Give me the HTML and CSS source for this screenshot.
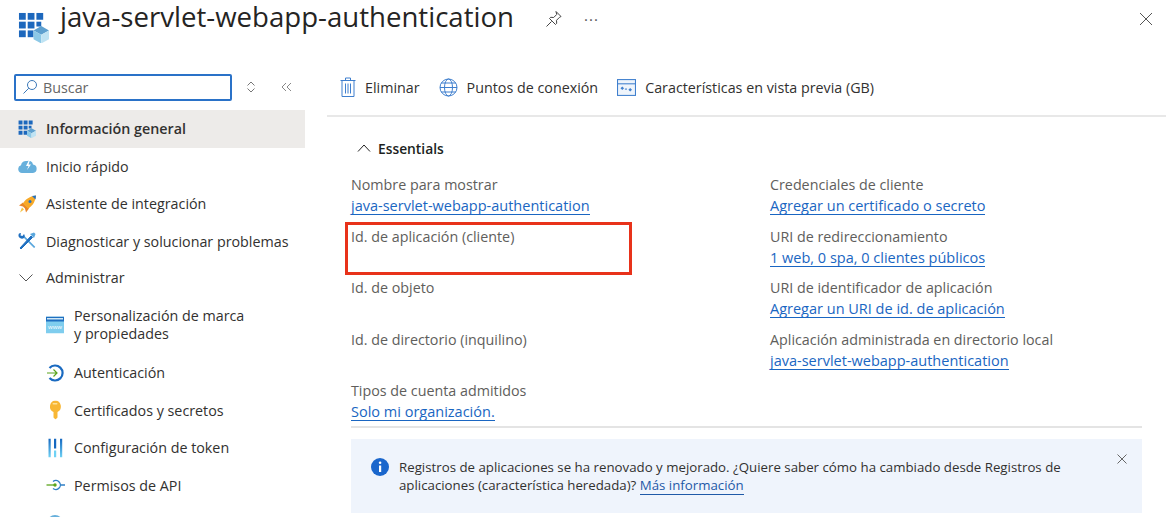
FILE: index.html
```html
<!DOCTYPE html>
<html lang="es">
<head>
    <meta charset="UTF-8">
    <meta name="viewport" content="width=device-width, initial-scale=1.0">
    <title>java-servlet-webapp-authentication</title>
    <link rel="stylesheet" href="styles.css">
</head>
<body>
    <header class="page-header">
        <svg class="app-icon" width="31" height="31" viewBox="0 0 32 32">
            <g fill="#1d68bd">
                <rect x="1" y="1" width="7" height="7"/><rect x="10" y="1" width="7" height="7"/><rect x="19" y="1" width="7" height="7"/>
                <rect x="1" y="10" width="7" height="7"/><rect x="10" y="10" width="7" height="7"/><rect x="19" y="10" width="5" height="5"/>
                <rect x="1" y="19" width="7" height="7"/><rect x="10" y="19" width="6" height="7"/>
            </g>
            <path d="M16 19l8-4.500 8 4.500-8 4.500z" fill="#5ea0cf"/>
            <path d="M16 19l8 4.500v9l-8-4.500z" fill="#8cc8e6"/>
            <path d="M32 19l-8 4.500v9l8-4.500z" fill="#bfe3f3"/>
        </svg>
        <h1>java-servlet-webapp-authentication</h1>
        <svg class="pin-icon" width="18" height="18" viewBox="0 0 18 18" fill="none" stroke="#444" stroke-width="1">
            <path d="M11 1.500l5 5-1.500 .8-3 3 .2 3-1.200 1.200-6-6 1.200-1.200 3 .2 3-3z"/><path d="M6.500 11.500L1.500 16.500"/>
        </svg>
        <span class="more-dots">···</span>
        <svg class="close-icon" width="14" height="14" viewBox="0 0 14 14" stroke="#555" stroke-width="1"><path d="M1 1l12 12M13 1L1 13"/></svg>
    </header>

    <div class="layout">
        <nav class="sidebar">
            <div class="search-row">
                <div class="search-box">
                    <svg width="16" height="16" viewBox="0 0 16 16" fill="none" stroke="#3b78b8" stroke-width="1"><circle cx="10" cy="6" r="4.500"/><path d="M6.800 9.200L1.500 14.500"/></svg>
                    <span>Buscar</span>
                </div>
                <svg class="search-tool" width="10" height="12" viewBox="0 0 10 12" fill="none" stroke="#777"><path d="M1.500 4.500L5 1l3.500 3.500M1.500 7.500L5 11l3.500-3.500"/></svg>
                <svg class="search-tool collapse" width="11" height="10" viewBox="0 0 11 10" fill="none" stroke="#888"><path d="M5 1L1 5l4 4M10 1L6 5l4 4"/></svg>
            </div>

            <ul class="nav-list">
                <li class="nav-item active">
                    <svg class="nav-icon" width="18" height="18" viewBox="0 0 32 32">
                        <path d="M1 1h7v7H1zM10 1h7v7h-7zM19 1h7v7h-7zM1 10h7v7H1zM10 10h7v7h-7zM19 10h5v5h-5zM1 19h7v7H1zM10 19h6v7h-6z" fill="#1d68bd"/>
                        <path d="M16 19l8-4.500 8 4.500-8 4.500z" fill="#5ea0cf"/><path d="M16 19l8 4.500v9l-8-4.500z" fill="#8cc8e6"/><path d="M32 19l-8 4.500v9l8-4.500z" fill="#bfe3f3"/>
                    </svg>
                    Información general
                </li>
                <li class="nav-item">
                    <svg class="nav-icon" width="19" height="14" viewBox="0 0 19 14">
                        <path d="M4 14a4 4 0 0 1-1-7.800A5 5 0 0 1 9 2a4.500 4.500 0 0 1 6 3.500 4.300 4.300 0 0 1 0 8.500z" fill="#67b0dc"/>
                        <path d="M11 1L8 7h2.500L9 11l4-5.500h-2.500L12 1z" fill="#fff"/>
                    </svg>
                    Inicio rápido
                </li>
                <li class="nav-item">
                    <svg class="nav-icon" width="19" height="19" viewBox="0 0 19 19">
                        <path d="M1 11l4-3 6 6-3 4-1-4-2-2z" fill="#e8862a"/>
                        <path d="M5 9c2-4 6-7 13-8-1 7-4 11-8 13z" fill="#f7a928"/>
                        <path d="M14 1.500l4-.500-.500 4z" fill="#2272c3"/>
                        <circle cx="12" cy="7" r="1.500" fill="#2272c3"/>
                        <path d="M4 13l2 2-4 3z" fill="#f6c445"/>
                    </svg>
                    Asistente de integración
                </li>
                <li class="nav-item">
                    <svg class="nav-icon" width="18" height="18" viewBox="0 0 18 18">
                        <path d="M16 16L5 5l1.200-1.200 11 11a1.400 1.400 0 0 1-1.200 1.200z" fill="#5aa7dd"/>
                        <path d="M2 16L13 4l1.500 1.500L3 17z" fill="#1f6fc0" stroke="#1f6fc0"/>
                        <path d="M12 2l4-1.500L17.500 2 16 6z" fill="#5aa7dd"/>
                        <path d="M1 1.500a3.500 3.500 0 0 0 1 4.500 3.500 3.500 0 0 0 4 0 3.500 3.500 0 0 0 0-4L4.500 4 2.500 3.500 3 1z" fill="#1f6fc0"/>
                    </svg>
                    Diagnosticar y solucionar problemas
                </li>
                <li class="nav-item nav-group">
                    <svg class="nav-icon" width="16" height="9" viewBox="0 0 16 9" fill="none" stroke="#555"><path d="M1.500 1L8 7.500 14.500 1"/></svg>
                    Administrar
                </li>
                <li class="nav-item nav-sub nav-tall">
                    <svg class="nav-icon" width="18" height="17" viewBox="0 0 18 17">
                        <rect width="18" height="17" fill="#7fcdee"/><rect width="18" height="5" fill="#1f6fc0"/>
                        <rect x="1" y="1.500" width="16" height="1.500" fill="#cfe7f6"/>
                        <text x="9" y="12.500" class="www">www</text>
                    </svg>
                    <span>Personalización de marca<br>y propiedades</span>
                </li>
                <li class="nav-item nav-sub">
                    <svg class="nav-icon" width="18" height="18" viewBox="0 0 18 18" fill="none">
                        <path d="M3.500 4a7.500 7.500 0 1 1 0 10" stroke="#1a6ac0" stroke-width="2.200"/>
                        <path d="M1 9h10M7.500 5.500L11 9l-3.500 3.500" stroke="#5ba41c" stroke-width="1.200"/>
                    </svg>
                    Autenticación
                </li>
                <li class="nav-item nav-sub">
                    <svg class="nav-icon" width="18" height="19" viewBox="0 0 18 19">
                        <path d="M9 0a6 6 0 0 1 2.500 11.400V17l-2 2-2-2v-5.600A6 6 0 0 1 9 0z" fill="#f8b735"/>
                        <rect x="6.500" y="2.500" width="5" height="1.500" rx=".7" fill="#fde29a"/>
                    </svg>
                    Certificados y secretos
                </li>
                <li class="nav-item nav-sub">
                    <svg class="nav-icon" width="18" height="19" viewBox="0 0 18 19">
                        <defs><linearGradient id="tokenBar" x1="0" y1="0" x2="0" y2="1"><stop offset="0" stop-color="#1668c0"/><stop offset="1" stop-color="#6fd2f5"/></linearGradient></defs>
                        <rect x="2.500" y="0" width="2.200" height="19" fill="url(#tokenBar)"/>
                        <rect x="8" y="0" width="2.200" height="10" fill="#1668c0"/><rect x="8" y="12" width="2.200" height="7" fill="#6fd2f5"/>
                        <rect x="14" y="0" width="2.200" height="19" fill="url(#tokenBar)"/>
                    </svg>
                    Configuración de token
                </li>
                <li class="nav-item nav-sub">
                    <svg class="nav-icon" width="19" height="14" viewBox="0 0 19 14" fill="none">
                        <path d="M7 3.500a4.500 4.500 0 1 1 0 7M14 7h5" stroke="#2e7fc6" stroke-width="1.300"/>
                        <path d="M.5 7h8" stroke="#5ba41c" stroke-width="1.300"/><circle cx="9" cy="7" r="1.700" fill="#5ba41c"/>
                    </svg>
                    Permisos de API
                </li>
                <li class="nav-item nav-sub">
                    <svg class="nav-icon" width="18" height="18" viewBox="0 0 18 18"><circle cx="9" cy="9" r="8" fill="#67b0dc"/></svg>
                </li>
            </ul>
        </nav>

        <main class="content">
            <div class="toolbar">
                <div class="tool">
                    <svg width="16" height="20" viewBox="0 0 16 20" fill="none" stroke="#3f7fce"><path d="M.5 3.500h15M5.500 3V1h5v2M2 3.500V19.500h12V3.500M5.500 6.500v10M8 6.500v10M10.500 6.500v10"/></svg>
                    Eliminar
                </div>
                <div class="tool">
                    <svg width="19" height="19" viewBox="0 0 19 19" fill="none" stroke="#3f7fce"><circle cx="9.500" cy="9.500" r="8.500"/><ellipse cx="9.500" cy="9.500" rx="4" ry="8.500"/><path d="M1 9.500h17M2.200 5h14.600M2.200 14h14.600"/></svg>
                    Puntos de conexión
                </div>
                <div class="tool">
                    <svg width="19" height="17" viewBox="0 0 18 16"><rect x=".5" y=".5" width="17" height="15" fill="#eef4fb" stroke="#3f7fce"/><path d="M.5 4.500h17" stroke="#3f7fce"/><path d="M5 7l1.700 1.700L5 10.400 3.300 8.700zM12.500 8.500l1.700 1.700-1.700 1.700-1.700-1.700z" fill="#3f7fce"/><path d="M7.500 9.500h2" stroke="#3f7fce"/></svg>
                    Características en vista previa (GB)
                </div>
            </div>

            <section class="essentials">
                <div class="essentials-title">
                    <svg width="14" height="8" viewBox="0 0 14 8" fill="none" stroke="#222"><path d="M1 7.500l6-6.500 6 6.500"/></svg>
                    Essentials
                </div>
                <div class="essentials-grid">
                    <div class="field-col">
                        <div class="field"><span>Nombre para mostrar</span><a>java-servlet-webapp-authentication</a></div>
                        <div class="field"><span>Id. de aplicación (cliente)</span></div>
                        <div class="field"><span>Id. de objeto</span></div>
                        <div class="field"><span>Id. de directorio (inquilino)</span></div>
                        <div class="field"><span>Tipos de cuenta admitidos</span><a>Solo mi organización.</a></div>
                        <div class="red-box"></div>
                    </div>
                    <div class="field-col">
                        <div class="field"><span>Credenciales de cliente</span><a>Agregar un certificado o secreto</a></div>
                        <div class="field"><span>URI de redireccionamiento</span><a>1 web, 0 spa, 0 clientes públicos</a></div>
                        <div class="field"><span>URI de identificador de aplicación</span><a>Agregar un URI de id. de aplicación</a></div>
                        <div class="field"><span>Aplicación administrada en directorio local</span><a>java-servlet-webapp-authentication</a></div>
                    </div>
                </div>
            </section>

            <div class="info-banner">
                <svg width="18" height="18" viewBox="0 0 18 18"><circle cx="9" cy="9" r="9" fill="#1a66cc"/><rect x="8" y="7.500" width="2.200" height="6.500" fill="#fff"/><circle cx="9.100" cy="4.800" r="1.300" fill="#fff"/></svg>
                <p>Registros de aplicaciones se ha renovado y mejorado. ¿Quiere saber cómo ha cambiado desde Registros de aplicaciones (característica heredada)? <a>Más información</a></p>
                <svg class="banner-close" width="10" height="10" viewBox="0 0 10 10" stroke="#666"><path d="M.5 .5l9 9M9.500 .5l-9 9"/></svg>
            </div>
        </main>
    </div>
</body>
</html>
```

FILE: styles.css
```css
* {
    margin: 0;
    padding: 0;
    box-sizing: border-box;
    font-family: 'Open Sans', 'Noto Sans', sans-serif;
}
html, body {
    height: 517px;
    overflow: hidden;
}
body {
    background-color: white;
    color: #323130;
    font-size: 14.3px;
}
a {
    color: #1a66c2;
    border-bottom: 1px solid #1a66c2;
    line-height: 17px;
}

/* Header */
.page-header {
    display: flex;
    align-items: center;
    height: 38px;
    padding-left: 18px;
}
.app-icon {
    align-self: flex-start;
    margin-top: 12px;
    margin-right: 11px;
}
.page-header h1 {
    font-size: 27.6px;
    font-weight: 400;
    color: #252423;
    white-space: nowrap;
    width: 485px;
    margin-bottom: 6px;
}
.more-dots {
    margin-left: 21px;
    color: #555;
    font-size: 15px;
    letter-spacing: 1px;
}
.close-icon {
    margin-left: auto;
    margin-right: 13px;
}

.layout {
    display: grid;
    grid-template-columns: 305px 1fr;
    margin-top: 35px;
}

/* Sidebar */
.search-row {
    display: flex;
    align-items: center;
    padding-left: 14px;
    height: 28px;
}
.search-box {
    display: flex;
    align-items: center;
    gap: 5px;
    width: 218px;
    height: 27px;
    padding-left: 6px;
    border: 2px solid #2a72c8;
    border-radius: 2px;
    color: #666;
}
.search-tool {
    margin-left: 14px;
}
.collapse {
    margin-left: 25px;
}
.nav-list {
    list-style-type: none;
    margin-top: 9px;
}
.nav-item {
    display: flex;
    align-items: center;
    height: 37.500px;
    padding-left: 46px;
    position: relative;
    white-space: nowrap;
}
.nav-item span {
    line-height: 18px;
}
.nav-icon {
    position: absolute;
    left: 18px;
    top: 50%;
    transform: translateY(-50%);
}
.active {
    background-color: #edebe9;
    font-weight: 600;
}
.nav-sub {
    padding-left: 74px;
}
.nav-sub .nav-icon {
    left: 46px;
}
.nav-group {
    height: 35px;
}
.nav-tall {
    height: 59px;
}

/* Main area */
.content {
    padding-left: 22px;
}
.toolbar {
    display: flex;
    align-items: center;
    gap: 19px;
    height: 44px;
    padding-left: 13px;
    padding-bottom: 14px;
    border-bottom: 2px solid #e8e8e8;
}
.tool {
    display: flex;
    align-items: center;
    gap: 9px;
    white-space: nowrap;
}
.essentials {
    padding-left: 24px;
    padding-right: 24px;
}
.essentials-title {
    display: flex;
    align-items: center;
    gap: 7px;
    margin-top: 21px;
    margin-left: 6px;
    height: 20px;
    font-size: 13.8px;
    font-weight: 600;
    color: #201f1e;
}
.essentials-grid {
    display: grid;
    grid-template-columns: 419px 1fr;
    margin-top: 17px;
    border-bottom: 2px solid #e4e4e4;
    height: 253px;
}
.field-col {
    position: relative;
}
.field {
    height: 51.500px;
    display: flex;
    flex-direction: column;
    align-items: flex-start;
    gap: 3px;
    color: #605e5c;
    white-space: nowrap;
}
.field a {
    font-size: 14.5px;
}
.red-box {
    position: absolute;
    left: -6px;
    top: 47px;
    width: 287px;
    height: 53px;
    border: 3px solid #e8321a;
}
.info-banner {
    display: flex;
    align-items: flex-start;
    gap: 10px;
    position: relative;
    width: 791px;
    height: 74px;
    margin-top: 11px;
    margin-left: 24px;
    padding: 19px 60px 0 20px;
    background-color: #eff4fc;
    font-size: 13.28px;
    line-height: 18px;
    color: #323130;
}
.info-banner p {
    width: 690px;
}
.info-banner a {
    color: #1f5aa8;
    border-bottom-color: #1f5aa8;
}
.info-banner svg {
    flex-shrink: 0;
}
.banner-close {
    position: absolute;
    right: 15px;
    top: 15px;
}
.www {
    font-size: 6px;
    fill: white;
    text-anchor: middle;
}
```
